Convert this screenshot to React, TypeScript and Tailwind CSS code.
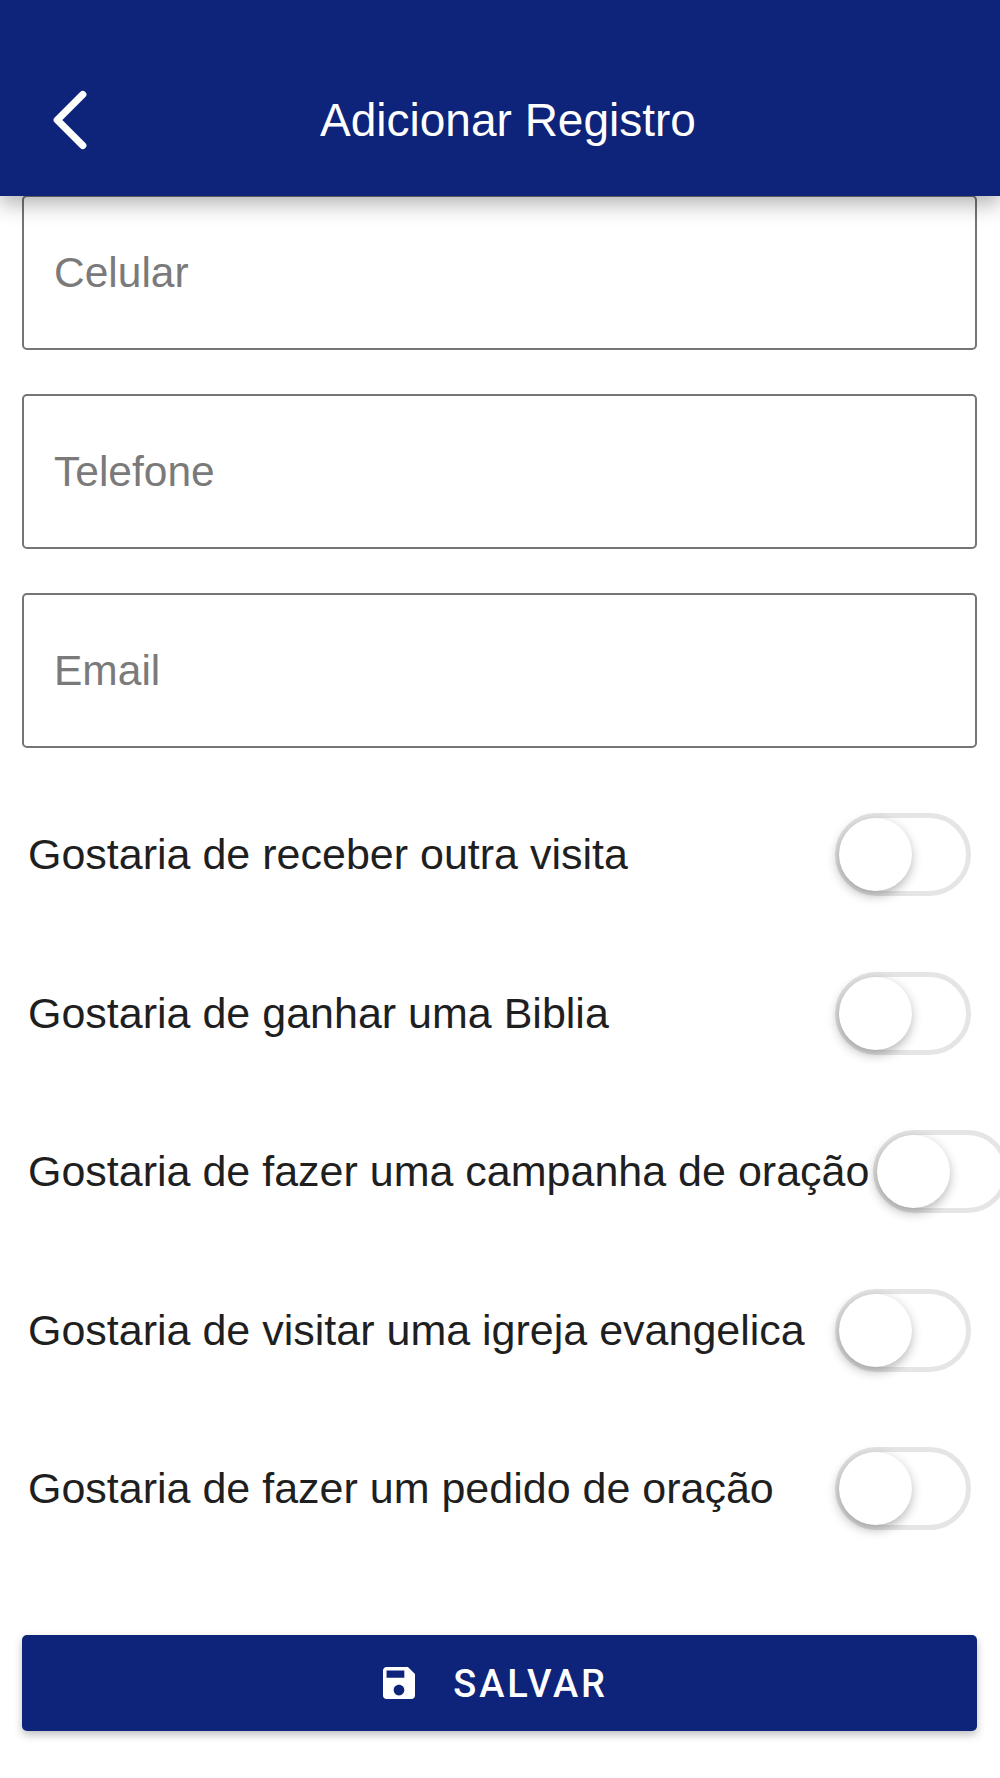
import { ChevronLeft } from "lucide-react";

const font = "font-['Liberation_Sans',Arial,sans-serif]";

function TextField({ label }: { label: string }) {
  return (
    <input
      placeholder={label}
      className={`block h-[155px] w-full rounded-[5px] border-2 border-[#757575] bg-white px-[30px] text-[42.5px] text-[#1f1f1f] outline-none placeholder:text-[#7a7a7a] ${font}`}
    />
  );
}

function Toggle() {
  return (
    <div className="relative ml-[4px] h-[83px] w-[136px] shrink-0 rounded-full border-[5px] border-[#e5e5e5] bg-white">
      <div className="absolute left-[-1px] top-0 size-[73px] rounded-full bg-white shadow-[-1px_4px_12px_rgba(0,0,0,0.32)]" />
    </div>
  );
}

const options = [
  "Gostaria de receber outra visita",
  "Gostaria de ganhar uma Biblia",
  "Gostaria de fazer uma campanha de oração",
  "Gostaria de visitar uma igreja evangelica",
  "Gostaria de fazer um pedido de oração",
];

export default function App() {
  return (
    <div className={`h-[1778px] w-[1000px] overflow-hidden bg-white ${font}`}>
      <header className="relative z-10 flex h-[196px] items-center bg-[#0e247a] pl-[19px] pr-[105px] pt-[44px] shadow-[0_8px_20px_rgba(0,0,0,0.3)]">
        <ChevronLeft className="size-[102px] shrink-0 text-white" strokeWidth={1.7} aria-hidden />
        <h1 className="flex-1 text-center text-[46px] font-normal leading-none text-white">Adicionar Registro</h1>
      </header>

      <div className="-mt-px flex flex-col gap-[44px] pl-[22px] pr-[23px]">
        <TextField label="Celular" />
        <TextField label="Telefone" />
        <TextField label="Email" />
      </div>

      <div className="mt-[65px] flex flex-col gap-[75.5px] pl-[28px] pr-[29px]">
        {options.map((option) => (
          <div key={option} className="flex h-[83px] items-center justify-between">
            <span className="whitespace-nowrap text-[43px] leading-none text-[#1f1f1f]">{option}</span>
            <Toggle />
          </div>
        ))}
      </div>

      <div className="mt-[105px] pl-[22px] pr-[23px]">
        <button className="flex h-[96px] w-full items-center justify-center gap-[38px] rounded-[5px] bg-[#0e247a] pr-[8px] shadow-[0_4px_8px_rgba(0,0,0,0.25)]">
          <svg viewBox="3 3 18 18" className="size-[32px]" fill="#fff" aria-hidden>
            <path d="M17 3H5c-1.11 0-2 .9-2 2v14c0 1.1.89 2 2 2h14c1.1 0 2-.9 2-2V7l-4-4zm-5 16c-1.66 0-3-1.34-3-3s1.34-3 3-3 3 1.34 3 3-1.34 3-3 3zm3-10H5V5h10v4z" />
          </svg>
          <span className="pt-[2px] font-['Roboto',sans-serif] text-[38px] font-medium leading-none tracking-[2.8px] text-white">SALVAR</span>
        </button>
      </div>
    </div>
  );
}
